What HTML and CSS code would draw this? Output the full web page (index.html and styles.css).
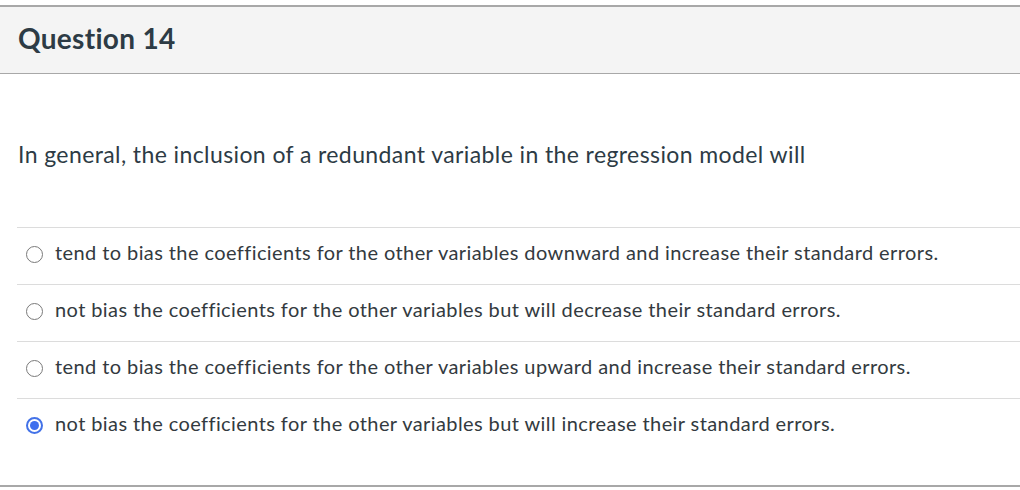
FILE: index.html
```html
<!DOCTYPE html>
<html>
<head>
<meta charset="utf-8">
<link rel="stylesheet" href="styles.css">
</head>
<body>
<div class="question">
  <div class="q-header"><h2 class="q-title">Question 14</h2></div>
  <div class="q-body">
    <p class="q-text">In general, the inclusion of a redundant variable in the regression model will</p>
    <div class="answers">
      <label class="answer"><span class="radio"></span><span class="answer-text">tend to bias the coefficients for the other variables downward and increase their standard errors.</span></label>
      <label class="answer"><span class="radio"></span><span class="answer-text">not bias the coefficients for the other variables but will decrease their standard errors.</span></label>
      <label class="answer"><span class="radio"></span><span class="answer-text">tend to bias the coefficients for the other variables upward and increase their standard errors.</span></label>
      <label class="answer"><span class="radio checked"></span><span class="answer-text">not bias the coefficients for the other variables but will increase their standard errors.</span></label>
    </div>
  </div>
</div>
</body>
</html>
```
FILE: styles.css
```css
html, body {
  margin: 0;
  padding: 0;
  background: #ffffff;
}
body {
  font-family: Lato, "Liberation Sans", sans-serif;
  color: #2d3b45;
  padding-top: 5px;
}
.question {
  border-bottom: 2px solid #a8a8a8;
  height: 482px;
  box-sizing: border-box;
  display: flex;
  flex-direction: column;
}
.q-header {
  background: #f4f4f4;
  border-top: 2px solid #a8a8a8;
  border-bottom: 1px solid #a8a8a8;
  height: 69px;
  box-sizing: border-box;
  display: flex;
  align-items: center;
  padding-left: 18px;
  padding-bottom: 4px;
}
.q-title {
  margin: 0;
  font-size: 28px;
  font-weight: 700;
  letter-spacing: 0.3px;
  color: #2d3b45;
}
.q-body {
  padding-left: 17px;
}
.q-text {
  margin: 0;
  padding-left: 1px;
  font-size: 23px;
  letter-spacing: 0.4px;
  line-height: 30px;
  padding-top: 65px;
  padding-bottom: 58px;
  color: #2d3b45;
}
.answers {
  display: flex;
  flex-direction: column;
}
.answer {
  display: flex;
  align-items: center;
  height: 57px;
  border-top: 1px solid #dcdcdc;
  box-sizing: border-box;
  padding-left: 9px;
  padding-bottom: 8px;
  gap: 12px;
  font-size: 20px;
  letter-spacing: 0.41px;
  color: #333a40;
}
.radio {
  width: 17px;
  height: 17px;
  border: 1.5px solid #7a7a7a;
  border-radius: 50%;
  box-sizing: border-box;
  flex: none;
  position: relative;
  top: 2px;
}
.radio.checked {
  border: 2px solid #4372e8;
  background: #fff;
  display: flex;
  align-items: center;
  justify-content: center;
}
.radio.checked::after {
  content: "";
  width: 9px;
  height: 9px;
  border-radius: 50%;
  background: #3e6fee;
}
```
